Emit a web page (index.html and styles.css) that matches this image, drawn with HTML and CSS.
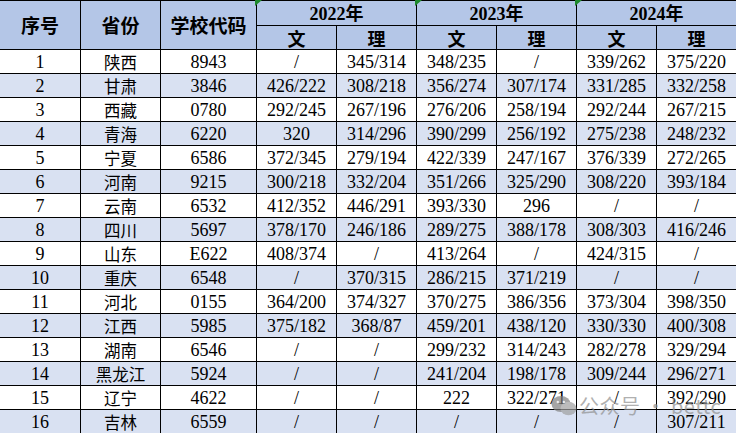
FILE: index.html
```html
<!DOCTYPE html>
<html lang="zh-CN">
<head>
<meta charset="utf-8">
<title>分数表</title>
<link rel="stylesheet" href="styles.css">
</head>
<body>
<div class="sheet">
<table class="scores">
  <colgroup>
    <col class="c-no"><col class="c-prov"><col class="c-code">
    <col class="c-y"><col class="c-y"><col class="c-y"><col class="c-y"><col class="c-y"><col class="c-y">
  </colgroup>
  <thead>
    <tr>
      <th rowspan="2" class="hd-cn">序号</th>
      <th rowspan="2" class="hd-cn">省份</th>
      <th rowspan="2" class="hd-cn">学校代码</th>
      <th colspan="2" class="hd-year mark">2022<span class="cn">年</span></th>
      <th colspan="2" class="hd-year mark">2023<span class="cn">年</span></th>
      <th colspan="2" class="hd-year mark">2024<span class="cn">年</span></th>
    </tr>
    <tr>
      <th class="hd-sub">文</th><th class="hd-sub">理</th>
      <th class="hd-sub">文</th><th class="hd-sub">理</th>
      <th class="hd-sub">文</th><th class="hd-sub">理</th>
    </tr>
  </thead>
  <tbody>
    <tr><td>1</td><td class="prov">陕西</td><td>8943</td><td>/</td><td>345/314</td><td>348/235</td><td>/</td><td>339/262</td><td>375/220</td></tr>
    <tr><td>2</td><td class="prov">甘肃</td><td>3846</td><td>426/222</td><td>308/218</td><td>356/274</td><td>307/174</td><td>331/285</td><td>332/258</td></tr>
    <tr><td>3</td><td class="prov">西藏</td><td>0780</td><td>292/245</td><td>267/196</td><td>276/206</td><td>258/194</td><td>292/244</td><td>267/215</td></tr>
    <tr><td>4</td><td class="prov">青海</td><td>6220</td><td>320</td><td>314/296</td><td>390/299</td><td>256/192</td><td>275/238</td><td>248/232</td></tr>
    <tr><td>5</td><td class="prov">宁夏</td><td>6586</td><td>372/345</td><td>279/194</td><td>422/339</td><td>247/167</td><td>376/339</td><td>272/265</td></tr>
    <tr><td>6</td><td class="prov">河南</td><td>9215</td><td>300/218</td><td>332/204</td><td>351/266</td><td>325/290</td><td>308/220</td><td>393/184</td></tr>
    <tr><td>7</td><td class="prov">云南</td><td>6532</td><td>412/352</td><td>446/291</td><td>393/330</td><td>296</td><td>/</td><td>/</td></tr>
    <tr><td>8</td><td class="prov">四川</td><td>5697</td><td>378/170</td><td>246/186</td><td>289/275</td><td>388/178</td><td>308/303</td><td>416/246</td></tr>
    <tr><td>9</td><td class="prov">山东</td><td>E622</td><td>408/374</td><td>/</td><td>413/264</td><td>/</td><td>424/315</td><td>/</td></tr>
    <tr><td>10</td><td class="prov">重庆</td><td>6548</td><td>/</td><td>370/315</td><td>286/215</td><td>371/219</td><td>/</td><td>/</td></tr>
    <tr><td>11</td><td class="prov">河北</td><td>0155</td><td>364/200</td><td>374/327</td><td>370/275</td><td>386/356</td><td>373/304</td><td>398/350</td></tr>
    <tr><td>12</td><td class="prov">江西</td><td>5985</td><td>375/182</td><td>368/87</td><td>459/201</td><td>438/120</td><td>330/330</td><td>400/308</td></tr>
    <tr><td>13</td><td class="prov">湖南</td><td>6546</td><td>/</td><td>/</td><td>299/232</td><td>314/243</td><td>282/278</td><td>329/294</td></tr>
    <tr><td>14</td><td class="prov">黑龙江</td><td>5924</td><td>/</td><td>/</td><td>241/204</td><td>198/178</td><td>309/244</td><td>296/271</td></tr>
    <tr><td>15</td><td class="prov">辽宁</td><td>4622</td><td>/</td><td>/</td><td>222</td><td>322/271</td><td>/</td><td>392/290</td></tr>
    <tr><td>16</td><td class="prov">吉林</td><td>6559</td><td>/</td><td>/</td><td>/</td><td>/</td><td>/</td><td>307/211</td></tr>
  </tbody>
</table>
<div class="watermark">
  <svg class="wm-icon" width="26" height="22" viewBox="0 0 26 22" aria-hidden="true">
    <ellipse cx="10" cy="9" rx="9.5" ry="8" fill="#808080"/>
    <ellipse cx="17.5" cy="13.5" rx="8" ry="6.8" fill="#a0a0a0"/>
    <circle cx="6.8" cy="7" r="1.2" fill="#e8e8e8"/>
    <circle cx="12.8" cy="7" r="1.2" fill="#e8e8e8"/>
  </svg>
  <span class="wm-text">公众号 · bettc</span>
</div>
</div>
</body>
</html>
```

FILE: styles.css
```css
html, body {
  margin: 0;
  padding: 0;
  background: #ffffff;
}

.sheet {
  position: relative;
  width: 736px;
  height: 433px;
  overflow: hidden;
}

.scores {
  border-collapse: collapse;
  table-layout: fixed;
  width: 738px;
  margin-left: -1px;
  font-family: "Liberation Serif", "Noto Sans CJK SC", serif;
  font-size: 18px;
  color: #000;
}

.c-no { width: 81px; }
.c-prov { width: 80px; }
.c-code { width: 96px; }
.c-y { width: 80px; }

.scores th,
.scores td {
  border: 1px solid #000;
  padding: 0;
  height: 23px;
  text-align: center;
  vertical-align: middle;
  line-height: 22px;
  white-space: nowrap;
}

.scores thead th {
  background: #b4c6e7;
  font-weight: bold;
}

.hd-cn {
  font-family: "Noto Sans CJK SC", sans-serif;
  font-size: 19px;
  font-weight: 700;
}

.hd-year {
  font-family: "Liberation Serif", "Noto Sans CJK SC", serif;
  font-size: 18px;
}

.hd-year .cn,
.hd-sub {
  font-family: "Noto Sans CJK SC", sans-serif;
  font-weight: 700;
}

.hd-sub {
  font-size: 18px;
}

.mark {
  position: relative;
}

.mark::before {
  content: "";
  position: absolute;
  left: -2px;
  top: -1px;
  width: 0;
  height: 0;
  border-top: 6px solid #1f8a2e;
  border-right: 7px solid transparent;
}

.scores tbody tr:nth-child(even) td {
  background: #d9e1f2;
}

.prov {
  font-family: "Noto Sans CJK SC", sans-serif;
  font-size: 16.5px;
}

.watermark {
  position: absolute;
  left: 551px;
  top: 391px;
  display: flex;
  align-items: center;
  gap: 2px;
  opacity: 0.7;
  pointer-events: none;
}

.wm-text {
  font-family: "Noto Sans CJK SC", sans-serif;
  font-size: 20px;
  color: #909090;
  letter-spacing: 0.5px;
}
```
